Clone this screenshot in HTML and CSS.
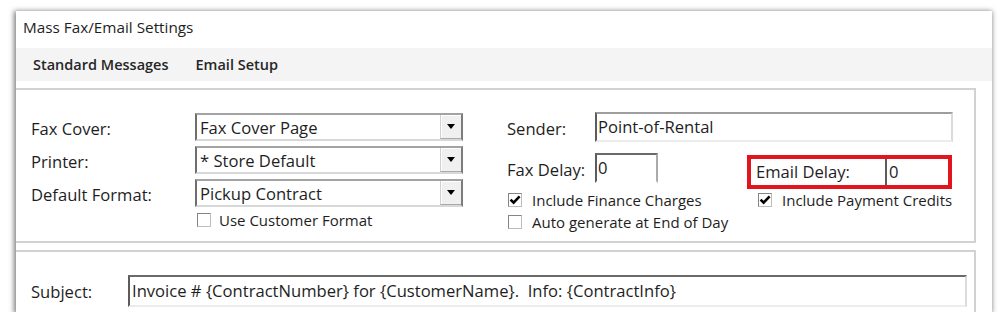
FILE: index.html
```html
<!DOCTYPE html>
<html lang="en">
<head>
    <meta charset="UTF-8">
    <title>Mass Fax/Email Settings</title>
    <link rel="stylesheet" href="styles.css">
</head>
<body>
    <div class="window">
        <div class="titlebar">Mass Fax/Email Settings</div>

        <div class="menubar">
            <span class="menu-item">Standard Messages</span>
            <span class="menu-item">Email Setup</span>
        </div>

        <div class="group group-options">
            <div class="left-block">
                <span class="field-label">Fax Cover:</span>
                <div class="combo">
                    <span class="combo-value">Fax Cover Page</span>
                    <span class="combo-btn"><svg width="8" height="5" viewBox="0 0 8 5"><path d="M0 0H8L4 5Z" fill="#000"/></svg></span>
                </div>

                <span class="field-label">Printer:</span>
                <div class="combo">
                    <span class="combo-value">* Store Default</span>
                    <span class="combo-btn"><svg width="8" height="5" viewBox="0 0 8 5"><path d="M0 0H8L4 5Z" fill="#000"/></svg></span>
                </div>

                <span class="field-label">Default Format:</span>
                <div class="combo">
                    <span class="combo-value">Pickup Contract</span>
                    <span class="combo-btn"><svg width="8" height="5" viewBox="0 0 8 5"><path d="M0 0H8L4 5Z" fill="#000"/></svg></span>
                </div>

                <span></span>
                <div class="check-row check-customer">
                    <span class="checkbox"></span>
                    <span>Use Customer Format</span>
                </div>
            </div>

            <div class="right-block">
                <div class="sender-row">
                    <span class="field-label sender-label">Sender:</span>
                    <div class="textbox sender-box">Point-of-Rental</div>
                </div>

                <div class="delay-grid">
                    <div class="fax-delay">
                        <span class="field-label sender-label">Fax Delay:</span>
                        <div class="textbox fax-delay-box">0</div>
                    </div>
                    <div class="email-delay">
                        <span class="email-delay-label">Email Delay:</span>
                        <span class="email-delay-box">0</span>
                    </div>

                    <div class="check-row check-finance">
                        <span class="checkbox checked"><svg width="12" height="12" viewBox="0 0 12 12"><path d="M1.6 5.6L4.6 8.6L10.6 2.4" fill="none" stroke="#000" stroke-width="2.6"/></svg></span>
                        <span>Include Finance Charges</span>
                    </div>
                    <div class="check-row check-payment">
                        <span class="checkbox checked"><svg width="12" height="12" viewBox="0 0 12 12"><path d="M1.6 5.6L4.6 8.6L10.6 2.4" fill="none" stroke="#000" stroke-width="2.6"/></svg></span>
                        <span>Include Payment Credits</span>
                    </div>

                    <div class="check-row check-finance">
                        <span class="checkbox"></span>
                        <span>Auto generate at End of Day</span>
                    </div>
                </div>
            </div>
        </div>

        <div class="group group-subject">
            <span class="field-label subject-label">Subject:</span>
            <div class="textbox subject-box">Invoice # {ContractNumber} for {CustomerName}.&nbsp; Info: {ContractInfo}</div>
        </div>
    </div>
</body>
</html>
```

FILE: styles.css
```css
body {
    margin: 0;
    padding: 11px 0 0 16px;
    background: #fff;
    font-family: "Open Sans", "Noto Sans", sans-serif;
    font-size: 16.6px;
    color: #1e1e1e;
}
.window {
    width: 976px;
    height: 301px;
    background: #fff;
    box-shadow: -1px 1px 5px 1px rgba(0,0,0,0.5);
    overflow: hidden;
}
.titlebar {
    height: 37px;
    line-height: 32px;
    padding-left: 7px;
    font-size: 15.3px;
}
.menubar {
    height: 33px;
    background: #f4f4f4;
    display: flex;
    align-items: center;
    gap: 27px;
    padding-left: 17px;
    font-weight: 600;
    font-size: 14.5px;
    color: #262626;
}
.group {
    margin: 7px 16px 0 -2px;
    border: 2px solid #d2d2d2;
    box-sizing: border-box;
}
.group-options {
    height: 155px;
    display: flex;
    align-items: flex-start;
    padding: 23px 0 0 15px;
}
.left-block {
    display: grid;
    grid-template-columns: 164px 268px;
    grid-template-rows: 28px 28px 28px auto;
    row-gap: 5px;
    align-items: center;
}
.field-label {
    padding-top: 2px;
    white-space: nowrap;
}
.combo {
    height: 28px;
    box-sizing: border-box;
    display: flex;
    border: 2px solid;
    border-color: #a3a3a3 #7c7c7c #d8d8d8 #6f6f6f;
    background: #fff;
}
.combo-value {
    flex: 1;
    padding-left: 3px;
    line-height: 25px;
}
.combo-btn {
    width: 20px;
    display: flex;
    align-items: center;
    justify-content: center;
    background: #f0f0f0;
    border-left: 1px solid #d0d0d0;
    border-bottom: 1px solid #a9a9a9;
    box-shadow: inset 1px 1px 0 #fff;
}
.check-row {
    display: flex;
    align-items: center;
    gap: 10px;
    font-size: 15px;
    white-space: nowrap;
}
.check-customer {
    align-self: start;
    height: 16px;
    padding-left: 2px;
    gap: 8px;
}
.checkbox {
    width: 14px;
    height: 14px;
    box-sizing: border-box;
    border: 1px solid;
    border-color: #858585 #bdbdbd #bdbdbd #858585;
    background: #fff;
    display: flex;
    align-items: center;
    justify-content: center;
    flex-shrink: 0;
}
.right-block {
    margin: -1px 0 0 44px;
}
.sender-row {
    display: flex;
    align-items: center;
    height: 30px;
}
.sender-label {
    width: 88px;
}
.textbox {
    box-sizing: border-box;
    border: 2px solid;
    border-color: #9e9e9e #dadada #ececec #5c5c5c;
    background: #fff;
    padding-left: 1px;
}
.sender-box {
    width: 358px;
    height: 30px;
    line-height: 26px;
}
.delay-grid {
    margin-top: 11px;
    display: grid;
    grid-template-columns: 240px auto;
    grid-template-rows: 36px 22px 22px;
}
.fax-delay {
    display: flex;
    align-items: center;
    align-self: start;
    height: 30px;
}
.fax-delay-box {
    width: 63px;
    height: 30px;
    line-height: 26px;
    border-color: #6a6a6a #ababab #ffffff #5c5c5c;
}
.email-delay {
    width: 205px;
    margin-top: 2px;
    height: 34px;
    box-sizing: border-box;
    border: 4px solid #e2151e;
    display: flex;
}
.email-delay-label {
    width: 129px;
    padding-left: 5px;
    line-height: 26px;
    white-space: nowrap;
}
.email-delay-box {
    flex: 1;
    border-left: 2px solid #5c5c5c;
    padding-left: 2px;
    line-height: 26px;
}
.check-finance {
    padding-left: 1px;
}
.check-payment {
    padding-left: 11px;
}
.group-subject {
    height: 80px;
    display: flex;
    align-items: flex-start;
    padding: 23px 7px 0 15px;
}
.subject-label {
    width: 97px;
    line-height: 30px;
}
.subject-box {
    flex: 1;
    height: 32px;
    line-height: 28px;
    padding-left: 2px;
    border-color: #6a6a6a #dcdcdc #ececec #5c5c5c;
}
```
